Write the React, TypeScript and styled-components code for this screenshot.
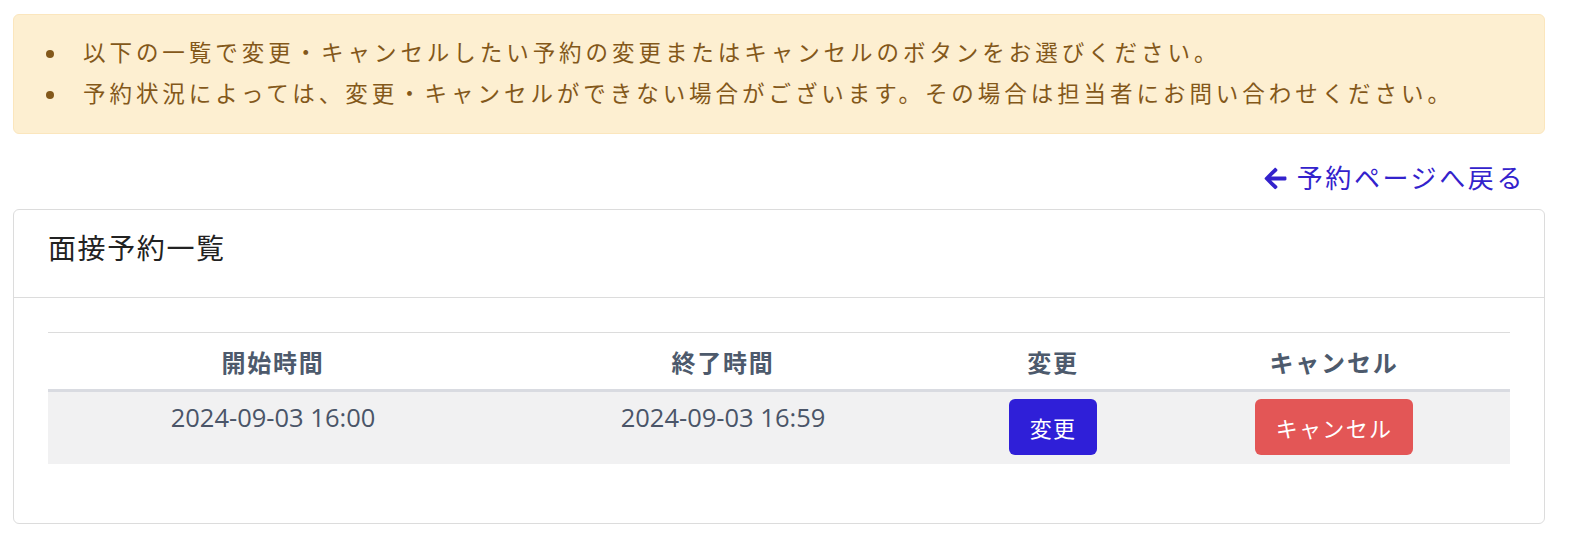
import styled, { createGlobalStyle } from "styled-components";
import { FaArrowLeft } from "react-icons/fa";

const Global = createGlobalStyle`
  body { margin: 0; background: #fff; font-family: "Open Sans", "Noto Sans CJK JP", sans-serif; }
`;

const Page = styled.div`
  padding: 14px 25px 20px 13px;
`;

const Alert = styled.div`
  background: #fdefd1;
  border: 1px solid #fbe6bd;
  border-radius: 6px;
  padding: 17px 20px 19px 30px;
  color: #83581a;
  ul { margin: 0; padding: 0; list-style: none; }
  li {
    display: flex;
    align-items: center;
    font-size: 22.5px;
    line-height: 41px;
    letter-spacing: 3.95px;
  }
  li::before {
    content: "";
    flex: none;
    width: 8px;
    height: 8px;
    border-radius: 50%;
    background: #83581a;
    margin: 2px 29px 0 2px;
  }
`;

const BackRow = styled.div`
  display: flex;
  justify-content: flex-end;
  padding: 24px 20px 11px 0;
`;

const BackLink = styled.a`
  display: inline-flex;
  align-items: center;
  gap: 9px;
  color: #3322cc;
  font-size: 26px;
  letter-spacing: 2.6px;
  line-height: 40px;
  text-decoration: none;
  svg { width: 25px; height: 25px; }
`;

const Card = styled.div`
  border: 1px solid #dcdcdc;
  border-radius: 6px;
  background: #fff;
`;

const CardHeader = styled.div`
  height: 88px;
  box-sizing: border-box;
  padding: 18px 34px 0;
  border-bottom: 1px solid #dcdcdc;
  font-size: 28px;
  line-height: 40px;
  letter-spacing: 1.6px;
  color: #222;
`;

const CardBody = styled.div`
  padding: 34px 34px 59px;
`;

const Table = styled.table`
  width: 100%;
  border-collapse: collapse;
  table-layout: fixed;
  border-top: 1px solid #dcdcdc;
  color: #4a5568;
`;

const Th = styled.th`
  height: 56px;
  font-size: 24px;
  font-weight: 700;
  letter-spacing: 1.8px;
  text-align: center;
  border-bottom: 3px solid #d9dbe1;
  padding: 0;
  color: #4d5a6c;
`;

const Row = styled.tr`
  background: #f1f1f2;
`;

const Td = styled.td`
  height: 72px;
  box-sizing: border-box;
  padding: 7px 0 9px;
  vertical-align: top;
  text-align: center;
  font-size: 25.5px;
  line-height: 36px;
`;

const Button = styled.button<{ $bg: string }>`
  height: 56px;
  padding: 0 21px;
  border: 0;
  border-radius: 6px;
  background: ${({ $bg }) => $bg};
  color: #fff;
  font-family: "Noto Sans CJK JP", sans-serif;
  font-size: 22px;
  letter-spacing: 1.3px;
  cursor: pointer;
`;

export default function App() {
  return (
    <Page>
      <Global />
      <Alert>
        <ul>
          <li>以下の一覧で変更・キャンセルしたい予約の変更またはキャンセルのボタンをお選びください。</li>
          <li>予約状況によっては、変更・キャンセルができない場合がございます。その場合は担当者にお問い合わせください。</li>
        </ul>
      </Alert>
      <BackRow>
        <BackLink href="#">
          <FaArrowLeft />
          予約ページへ戻る
        </BackLink>
      </BackRow>
      <Card>
        <CardHeader>面接予約一覧</CardHeader>
        <CardBody>
          <Table>
            <colgroup>
              <col style={{ width: 450 }} />
              <col style={{ width: 450 }} />
              <col style={{ width: 210 }} />
              <col />
            </colgroup>
            <thead>
              <tr>
                <Th>開始時間</Th>
                <Th>終了時間</Th>
                <Th>変更</Th>
                <Th>キャンセル</Th>
              </tr>
            </thead>
            <tbody>
              <Row>
                <Td>2024-09-03 16:00</Td>
                <Td>2024-09-03 16:59</Td>
                <Td><Button $bg="#2f1fd8">変更</Button></Td>
                <Td><Button $bg="#e35656">キャンセル</Button></Td>
              </Row>
            </tbody>
          </Table>
        </CardBody>
      </Card>
    </Page>
  );
}
